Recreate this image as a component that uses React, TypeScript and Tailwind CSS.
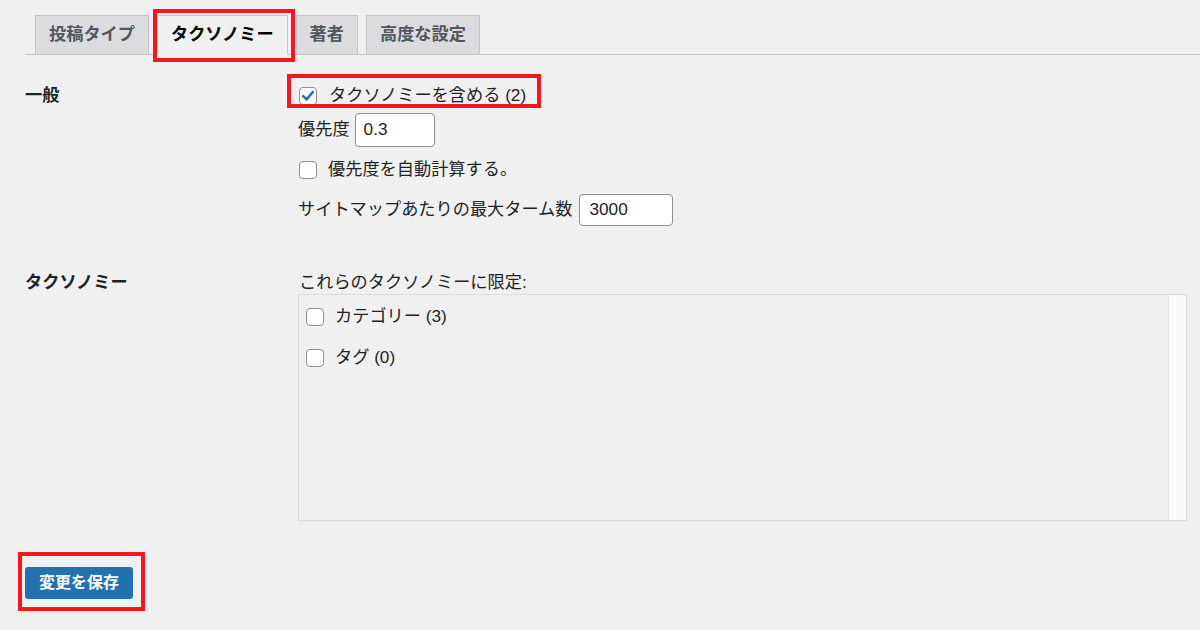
import React from "react";

const FONT = { fontFamily: '"Liberation Sans", "Noto Sans CJK JP", sans-serif' };

function Check({ checked }: { checked?: boolean }) {
  return (
    <span className="w-[18px] h-[18px] rounded-[4px] border border-[#8c8f94] bg-white flex items-center justify-center shrink-0">
      {checked && (
        <svg width="16" height="16" viewBox="0 0 20 20">
          <path d="M4 10.2 L8.2 14.2 L16 5" fill="none" stroke="#2271b1" strokeWidth="3.2" strokeLinecap="round" strokeLinejoin="round" />
        </svg>
      )}
    </span>
  );
}

function Tab({ label, active }: { label: string; active?: boolean }) {
  return (
    <div
      className={
        "h-[40px] px-[13px] flex items-center border border-[#c3c4c7] text-[17.2px] font-bold -mb-px " +
        (active ? "bg-[#f0f0f1] text-black border-b-[#f0f0f1]" : "bg-[#dcdcde] text-[#50575e]")
      }
    >
      {label}
    </div>
  );
}

export default function App() {
  return (
    <div className="w-[1200px] h-[630px] bg-[#f0f0f1] text-[#1d2327] relative overflow-hidden" style={FONT}>
      <div className="pl-[25px]">
        {/* tabs */}
        <div className="pt-[15px] flex items-end border-b border-[#c3c4c7] pl-[10px] gap-[8px]">
          <Tab label="投稿タイプ" />
          <Tab label="タクソノミー" active />
          <Tab label="著者" />
          <Tab label="高度な設定" />
        </div>

        {/* section 1 */}
        <div className="flex mt-[28px]">
          <div className="w-[273px] h-[26px] flex items-center text-[17.2px] font-bold">一般</div>
          <div className="flex flex-col text-[17.2px]">
            <div className="h-[26px] flex items-center gap-[12px] pl-[1px]">
              <Check checked />
              <span>タクソノミーを含める (2)</span>
            </div>
            <div className="mt-[4px] h-[34px] flex items-center gap-[5px]">
              <span>優先度</span>
              <div className="w-[80px] h-[34px] rounded-[4px] border border-[#8c8f94] bg-white flex items-center px-[8px]">0.3</div>
            </div>
            <div className="mt-[10px] h-[26px] flex items-center gap-[11px] pl-[1px]">
              <Check />
              <span>優先度を自動計算する。</span>
            </div>
            <div className="mt-[11px] h-[32px] flex items-center gap-[6px]">
              <span>サイトマップあたりの最大ターム数</span>
              <div className="w-[94px] h-[32px] rounded-[4px] border border-[#8c8f94] bg-white flex items-center px-[10px]">3000</div>
            </div>
          </div>
        </div>

        {/* section 2 */}
        <div className="flex mt-[46px]">
          <div className="w-[273px] h-[22px] flex items-center text-[17.2px] font-bold">タクソノミー</div>
          <div className="flex flex-col text-[17.2px]">
            <div className="h-[22px] flex items-center pl-[1px]">これらのタクソノミーに限定:</div>
            <div className="w-[889px] h-[227px] border border-[#dcdcde] flex">
              <div className="flex-1 pt-[9px] pl-[7px] flex flex-col gap-[16px]">
                <div className="h-[25px] flex items-center gap-[11px]">
                  <Check />
                  <span>カテゴリー (3)</span>
                </div>
                <div className="h-[25px] flex items-center gap-[11px]">
                  <Check />
                  <span>タグ (0)</span>
                </div>
              </div>
              <div className="w-[18px] bg-[#fafafa] border-l border-[#e4e4e6]" />
            </div>
          </div>
        </div>

        {/* save */}
        <button className="mt-[46px] w-[108px] h-[32px] rounded-[3px] bg-[#2271b1] text-white text-[16px] font-semibold flex items-center justify-center">
          変更を保存
        </button>
      </div>

      {/* red annotation boxes */}
      <div className="absolute left-[153px] top-[9px] w-[142px] h-[53px] border-[4px] border-[#f0191c]" />
      <div className="absolute left-[287px] top-[74px] w-[254px] h-[34px] border-[4px] border-[#f0191c]" />
      <div className="absolute left-[18px] top-[552px] w-[127px] h-[59px] border-[4px] border-[#f0191c]" />
    </div>
  );
}
